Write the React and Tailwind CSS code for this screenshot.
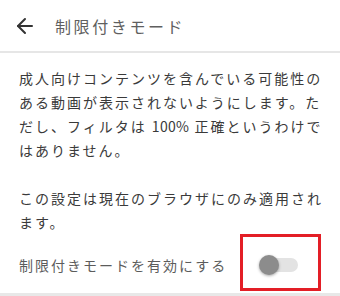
import { ArrowLeft } from 'lucide-react';

const FONT = { fontFamily: '"Noto Sans CJK JP", "Noto Sans", sans-serif' };

export default function App() {
  return (
    <div className="relative w-[340px] h-[296px] bg-white overflow-hidden" style={FONT}>
      {/* Header */}
      <div className="flex items-center h-[51px] pl-[13px]">
        <ArrowLeft className="w-6 h-6 text-[#333]" strokeWidth={2} />
        <span className="ml-[18px] text-[16px] tracking-[2.6px] text-[#5f5f5f]">制限付きモード</span>
      </div>
      <div className="h-[2px] bg-[#e6e6e6]" />

      {/* Body */}
      <div className="pt-[13px] px-[19px] text-[14px] leading-[24px] tracking-[2px] text-[#3a3a3a]">
        <p className="whitespace-nowrap">
          成人向けコンテンツを含んでいる可能性の<br />
          ある動画が表示されないようにします。た<br />
          だし、フィルタは <span className="tracking-[0.3px]">100%</span> 正確というわけで<br />
          はありません。
        </p>
        <p className="mt-[24px] whitespace-nowrap">
          この設定は現在のブラウザにのみ適用され<br />
          ます。
        </p>

        {/* Toggle row */}
        <div className="mt-[11px] h-[40px] flex items-center">
          <span className="w-[243px] text-[#5c5c5c]">制限付きモードを有効にする</span>
          <div className="relative w-[36px] h-[14px] rounded-full bg-[#e3e3e3]">
            <div className="absolute left-[-3px] top-[-3px] w-[20px] h-[20px] rounded-full bg-[#8c8c8c] shadow-[0_1px_3px_rgba(0,0,0,0.35)]" />
          </div>
        </div>
      </div>
      <div className="mt-[8px] h-[3px] bg-[#e8e8e8]" />

      {/* Annotation box */}
      <div className="absolute left-[240px] top-[234px] w-[81px] h-[57px] border-[3px] border-[#e31e26]" />
    </div>
  );
}
